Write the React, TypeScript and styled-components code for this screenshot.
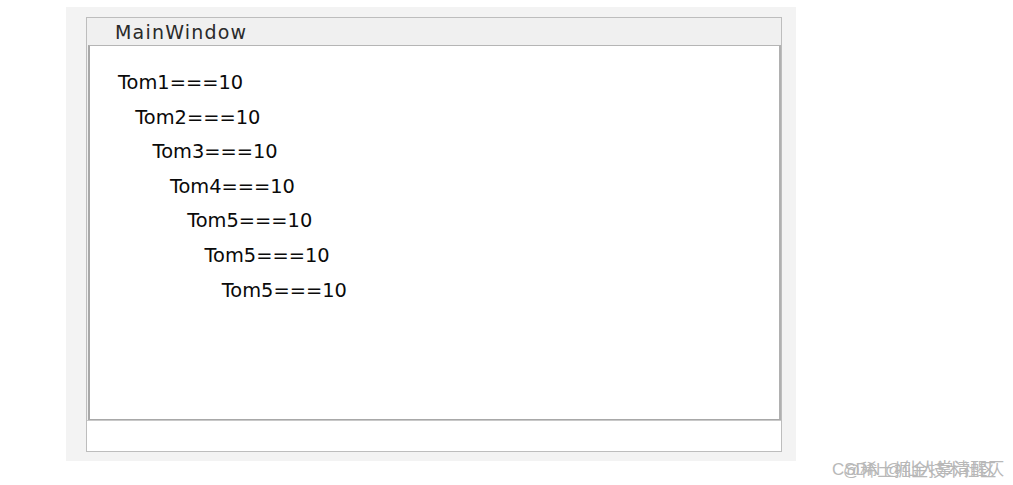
import React from "react";
import styled, { createGlobalStyle } from "styled-components";

const Global = createGlobalStyle`
  html, body { margin: 0; padding: 0; background: #ffffff; }
  body { width: 1013px; height: 485px; overflow: hidden; position: relative; font-family: "DejaVu Sans", sans-serif; }
`;

const Page = styled.div`
  position: relative;
  width: 1013px;
  height: 485px;
  padding: 7px 0 0 66px;
  box-sizing: border-box;
`;

const Backdrop = styled.div`
  width: 730px;
  height: 454px;
  background: #f3f3f3;
  padding: 10px 0 0 20px;
  box-sizing: border-box;
`;

const Window = styled.div`
  width: 696px;
  height: 435px;
  display: flex;
  flex-direction: column;
  box-sizing: border-box;
  border: 1px solid #bdbdbd;
  background: #f0f0f0;
`;

const TitleBar = styled.div`
  height: 27px;
  flex: none;
  display: flex;
  align-items: center;
  padding-left: 28px;
  background: #f0f0f0;
  font-family: "DejaVu Sans", sans-serif;
  font-size: 19px;
  letter-spacing: 1.2px;
  color: #2a2a2a;
`;

const Central = styled.div`
  flex: 1;
  margin: 0 0 0 1px;
  background: #ffffff;
  border-top: 1px solid #b5b5b5;
  border-left: 2px solid #a8a8a8;
  border-right: 2px solid #b0b0b0;
  border-bottom: 1px solid #a8a8a8;
  padding: 26px 0 0 28px;
  display: flex;
  flex-direction: column;
`;

const Row = styled.div<{ $level: number }>`
  height: 34.6px;
  padding-left: ${(p) => p.$level * 17.3}px;
  font-family: "DejaVu Sans", sans-serif;
  font-size: 19.4px;
  line-height: 22px;
  color: #0a0a0a;
  white-space: nowrap;
`;

const StatusBar = styled.div`
  height: 30px;
  flex: none;
  background: #ffffff;
  border-top: 1px solid #c8c8c8;
`;

const Watermark = styled.div`
  position: absolute;
  left: 832px;
  top: 455px;
  font-family: "Liberation Sans", "Noto Sans CJK SC", sans-serif;
  font-size: 17px;
  color: #b8b8b8;
  white-space: nowrap;
`;

const Watermark2 = styled(Watermark)`
  left: 843px;
  top: 456px;
`;

const rows = [
  "Tom1===10",
  "Tom2===10",
  "Tom3===10",
  "Tom4===10",
  "Tom5===10",
  "Tom5===10",
  "Tom5===10",
];

export default function App() {
  return (
    <>
      <Global />
      <Page>
        <Backdrop>
          <Window>
            <TitleBar>MainWindow</TitleBar>
            <Central>
              {rows.map((r, i) => (
                <Row key={i} $level={i}>
                  {r}
                </Row>
              ))}
            </Central>
            <StatusBar />
          </Window>
        </Backdrop>
        <Watermark>CSDN @仙人掌清醒仄</Watermark>
        <Watermark2>@稀土掘金技术社区</Watermark2>
      </Page>
    </>
  );
}
